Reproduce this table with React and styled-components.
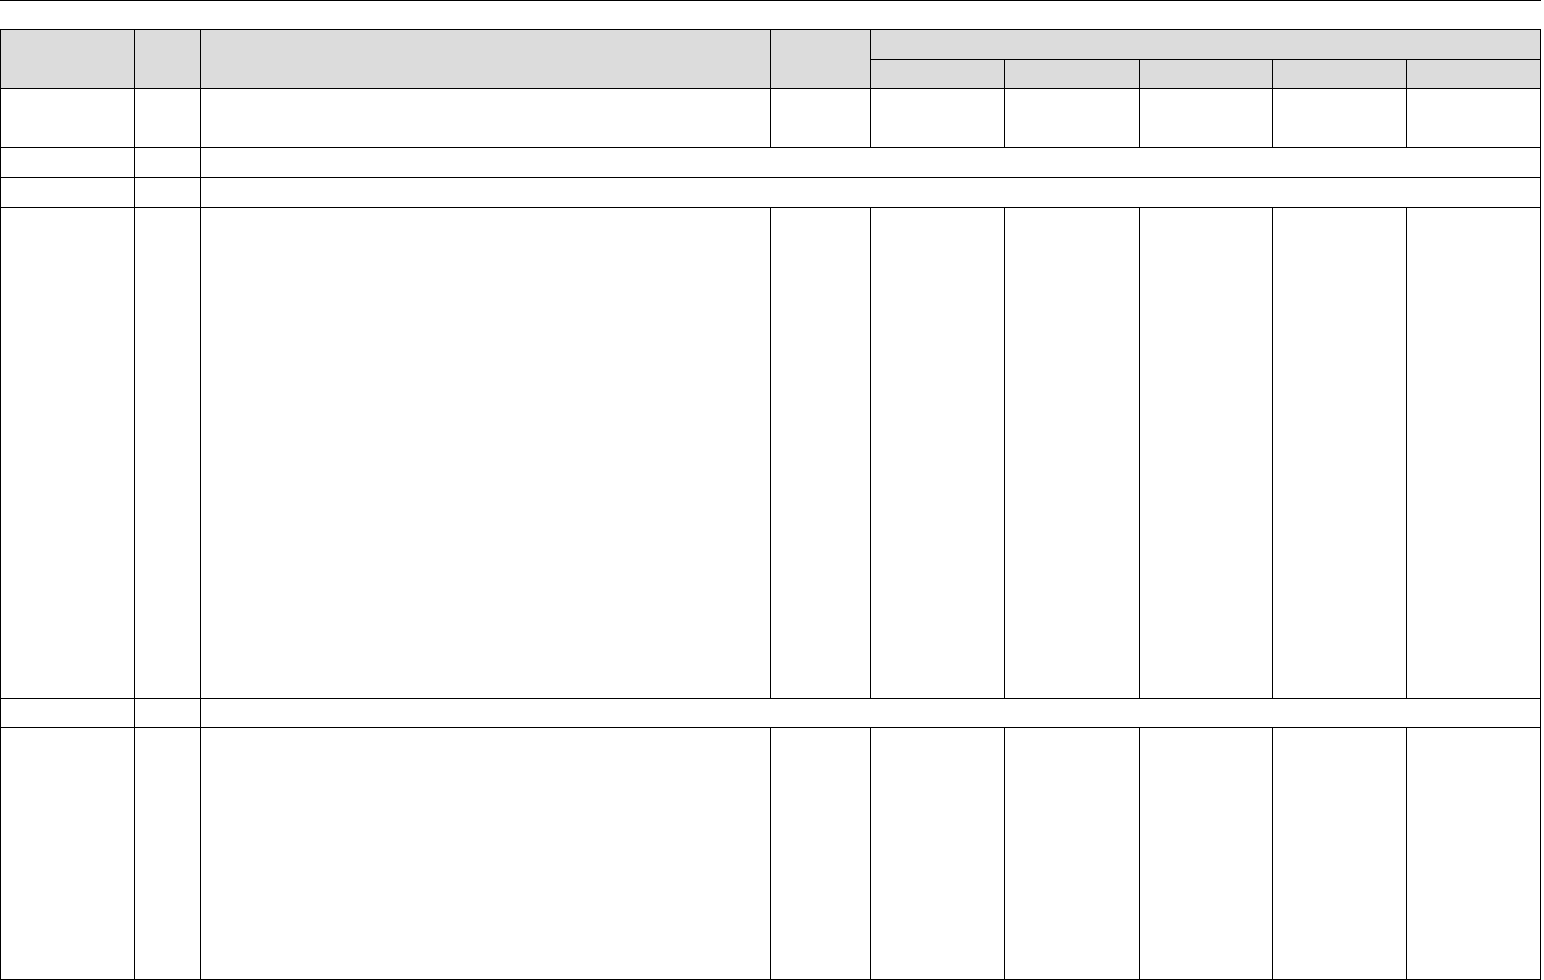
import React from "react";
import styled, { createGlobalStyle } from "styled-components";

const GlobalStyle = createGlobalStyle`
  html, body {
    margin: 0;
    padding: 0;
    background: #fff;
    font-family: "Liberation Sans", Arial, sans-serif;
  }
`;

const columns = [134, 66, 570, 100, 134, 135, 133, 134, 134];

function App() {
  return (
    <Page>
      <GlobalStyle />
      <TopRule />
      <Sheet>
        <colgroup>
          {columns.map((w, i) => (
            <col key={i} style={{ width: w }} />
          ))}
        </colgroup>
        <thead>
          <HeadRow height={30}>
            <HeadCell rowSpan={2} />
            <HeadCell rowSpan={2} />
            <HeadCell rowSpan={2} />
            <HeadCell rowSpan={2} />
            <HeadCell colSpan={5} />
          </HeadRow>
          <HeadRow height={29}>
            <HeadCell />
            <HeadCell />
            <HeadCell />
            <HeadCell />
            <HeadCell />
          </HeadRow>
        </thead>
        <tbody>
          <FullRow height={59} />
          <SpanRow height={30} />
          <SpanRow height={30} />
          <FullRow height={491} />
          <SpanRow height={29} />
          <FullRow height={252} />
        </tbody>
      </Sheet>
    </Page>
  );
}

function FullRow({ height }) {
  return (
    <Row height={height}>
      {columns.map((_, i) => (
        <Cell key={i} />
      ))}
    </Row>
  );
}

function SpanRow({ height }) {
  return (
    <Row height={height}>
      <Cell />
      <Cell />
      <Cell colSpan={7} />
    </Row>
  );
}

const Page = styled.div`
  width: 1544px;
`;

const TopRule = styled.div`
  width: 1541px;
  height: 1px;
  background: #000;
  margin-bottom: 28px;
`;

const Sheet = styled.table`
  width: 1541px;
  table-layout: fixed;
  border-collapse: collapse;
  border-spacing: 0;
`;

const HeadRow = styled.tr`
  height: ${(p) => p.height}px;
`;

const HeadCell = styled.th`
  padding: 0;
  border: 1px solid #000;
  background: #dcdcdc;
`;

const Row = styled.tr`
  height: ${(p) => p.height}px;
`;

const Cell = styled.td`
  padding: 0;
  border: 1px solid #000;
  background: #fff;
`;

export default App;
